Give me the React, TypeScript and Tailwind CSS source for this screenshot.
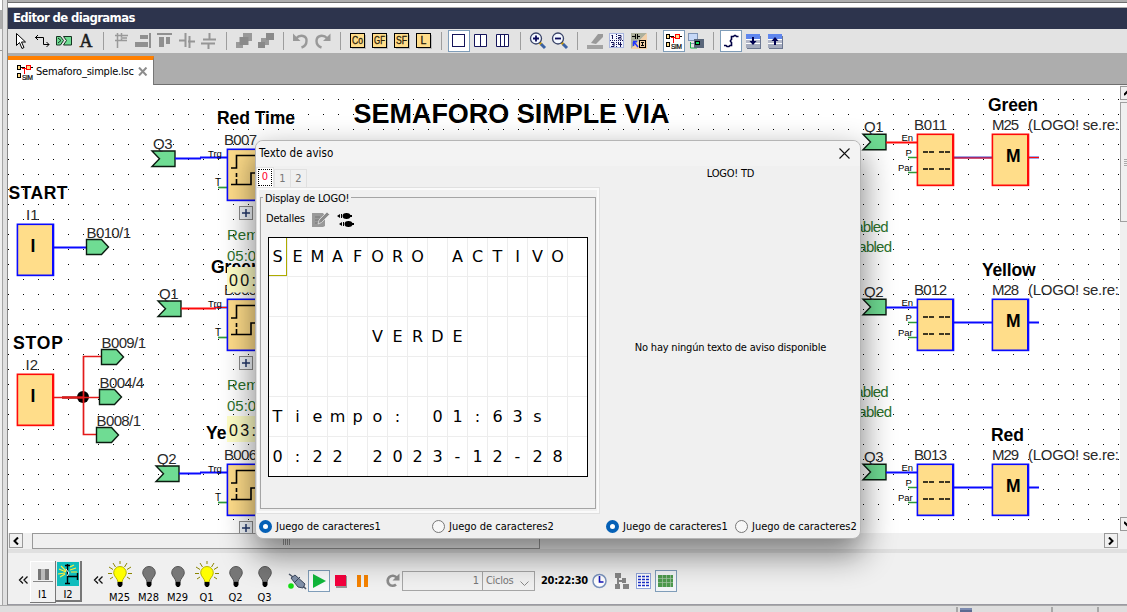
import React from "react";

const UI = "font-['DejaVu_Sans_Condensed','DejaVu_Sans',sans-serif] [font-stretch:condensed]";

/* ---------- toolbar ---------- */

function Slot({ children, active = false }: { children?: React.ReactNode; active?: boolean }) {
  return (
    <div className={active ? "h-[22px] w-[22px] bg-white outline -outline-offset-1 outline-[#7f9db9]" : "h-[22px] w-[22px]"}>
      <svg width="22" height="22" viewBox="0 0 22 22" className="block" fill="none">
        {children}
      </svg>
    </div>
  );
}

function Sep() {
  return (
    <div className="flex h-[18px] w-[13px] justify-center">
      <div className="w-px bg-[#9d9d9d]" />
    </div>
  );
}

function Tagged({ label }: { label: string }) {
  return (
    <Slot>
      <rect x="5" y="5" width="14" height="14" fill="#bbb" />
      <rect x="3.5" y="3.5" width="14" height="14" fill="#ffdd8a" stroke="#000" />
      <text x="10.5" y="14.3" fontSize="10.5" fontFamily="Liberation Sans Narrow, Liberation Sans" fill="#2b220a" stroke="#2b220a" strokeWidth=".3"
        textLength={label.length > 1 ? 11 : undefined} lengthAdjust="spacingAndGlyphs" textAnchor="middle">
        {label}
      </text>
    </Slot>
  );
}

function SimGlyph() {
  return (
    <g shapeRendering="crispEdges">
      <path d="M7 6.5h4M15 6.5h4" stroke="#000" />
      <rect x="3.5" y="4.5" width="3" height="4" stroke="#000" fill="#ffdd8a" />
      <rect x="3.5" y="12.5" width="3" height="4" stroke="#000" fill="#ffdd8a" />
      <path d="M8 7.5h5M10.5 7v6" stroke="#f00" />
      <rect x="12.5" y="4.5" width="4" height="4" stroke="#f00" fill="#ffdd8a" />
      <text x="8" y="18.5" fontSize="6.5" textLength="11" fontFamily="Liberation Sans" fill="#000" stroke="#000" strokeWidth=".2">SIM</text>
    </g>
  );
}

function Magnifier({ plus }: { plus: boolean }) {
  return (
    <Slot>
      <path d="M12 12l2.5 2.5" stroke="#d9a400" strokeWidth="2.5" />
      <path d="M14 14l4 4" stroke="#3c62a4" strokeWidth="3" />
      <circle cx="9" cy="8.5" r="5.5" fill="#f4f8ff" stroke="#3a4468" strokeWidth="1.3" />
      <path d={plus ? "M6 8.5h6M9 5.5v6" : "M6 8.5h6"} stroke="#0a0a5c" strokeWidth="1.8" />
    </Slot>
  );
}

function UpDown({ up }: { up: boolean }) {
  return (
    <Slot>
      <g shapeRendering="crispEdges">
        <path d="M5 19h14V6h-1v12H5z" fill="#6b7690" />
        <rect x="4" y="4" width="14" height="5" fill="#5f86ee" />
        <rect x="4" y="9" width="14" height="1" fill="#fff" />
        <rect x="4" y="10" width="14" height="3" fill="#b4b8c8" />
        <rect x="4" y="13" width="14" height="1" fill="#fff" />
        <rect x="4" y="14" width="14" height="4" fill="#a5abbd" />
        <path d={up ? "M10 9h2v6h-2z" : "M10 7h2v6h-2z"} fill="#000050" />
      </g>
      <path d={up ? "M7.5 11L11 7l3.500 4z" : "M7.500 11L11 15l3.500-4z"} fill="#000050" />
    </Slot>
  );
}

function Toolbar() {
  return (
    <div className="flex h-6 shrink-0 items-center bg-[#e3e3e3] pl-px">
      <Slot>
        <path d="M7.5 3.500v12l3-3 2.500 6 2-1-2.500-5.500h4z" fill="#fff" stroke="#000" />
      </Slot>
      <Slot>
        <path d="M4 7.500h8.500v7H18M7 5l-2.500 2.500L7 10M15.500 12l2.500 2.500-2.500 2.500" stroke="#000" />
      </Slot>
      <Slot>
        <path d="M3.500 6.500h4l3 4-3 4.500h-4zM18.500 6.500h-8l3 4-3 4.500h8z" fill="#6fdc93" stroke="#173321" />
        <path d="M5 8l3 2.500L5 13" stroke="#173321" />
      </Slot>
      <Slot>
        <text x="11" y="17" textAnchor="middle" fontSize="18" fontFamily="Liberation Serif" fill="#1c1c1c" stroke="#1c1c1c" strokeWidth=".5">A</text>
      </Slot>
      <Sep />
      <Slot>
        <path d="M5 5.500h13M5 10.500h12M7.500 3v15M11.500 3v8" stroke="#999" strokeWidth="1.500" />
        <path d="M11 7h6v2h-6z" fill="#aaa" />
      </Slot>
      <Slot>
        <path d="M8 5h8v4H8zM3 12h13v5H3z" fill="#909090" />
        <path d="M18 3v15" stroke="#909090" strokeWidth="2" />
      </Slot>
      <Slot>
        <path d="M5 7h5v10H5zM12 7h4v7h-4zM3 3h15v2H3z" fill="#909090" />
      </Slot>
      <Slot>
        <path d="M3 10.500h6M12 11.500h7M9.500 3v14M13.500 6v12" stroke="#969696" strokeWidth="2" />
      </Slot>
      <Slot>
        <path d="M5 9.500h13M3 13.500h14M11.500 3v6M10.500 14v5" stroke="#969696" strokeWidth="2" />
      </Slot>
      <Sep />
      <Slot>
        <path d="M10 3h9v8h-9zM3 12h7v6H3z" fill="#999" />
        <path d="M6.500 7h9v8h-9z" fill="#8a8a8a" />
      </Slot>
      <Slot>
        <path d="M6 8h8v7H6z" fill="#999" />
        <path d="M11 3h8v7h-8zM3 12h7v6H3z" fill="#8a8a8a" />
      </Slot>
      <Sep />
      <Slot>
        <path d="M3 3.500v7.500h7.500z" fill="#999" />
        <path d="M6 8.500C10 4 17 5.500 16.500 11c0 3-2 5.500-5 6.500" stroke="#999" strokeWidth="2.400" />
      </Slot>
      <Slot>
        <path d="M18.500 3.500v7.500H11z" fill="#999" />
        <path d="M15.500 8.500C11 4 4.500 5.500 4.500 11c0 3 2 5.500 5 6.500" stroke="#999" strokeWidth="2.400" />
      </Slot>
      <Sep />
      <Tagged label="Co" />
      <Tagged label="GF" />
      <Tagged label="SF" />
      <Tagged label="L" />
      <Sep />
      <Slot active>
        <rect x="4.500" y="4.500" width="12" height="12" stroke="#14145a" fill="#fff" />
      </Slot>
      <Slot>
        <path d="M4.500 4.500h12v12h-12zM10.500 4.500v12" stroke="#14145a" fill="#fff" />
      </Slot>
      <Slot>
        <path d="M4.500 4.500h12v12h-12zM8.500 4.500v12M12.500 4.500v12" stroke="#14145a" fill="#fff" />
      </Slot>
      <Sep />
      <Magnifier plus />
      <Magnifier plus={false} />
      <Sep />
      <Slot>
        <path d="M3 15h16v4H3z" fill="#a3a3a3" />
        <path d="M7 13l7-9h5v3l-7 7z" fill="#999" />
      </Slot>
      <Slot>
        <rect x="3.500" y="3.500" width="14" height="14" fill="#f3f5ff" stroke="#a9b6e0" />
        <path d="M10.500 4v14M4 10.500h14" stroke="#14145a" strokeDasharray="1 1" />
        <path d="M6.500 9V5M5.500 5.500h1M12 5.500h3v2h-2.500v1.500H16M5 12.500h3v4H5M6 14.500h2M12.500 12v2.500H16M14.500 12v5" stroke="#14145a" />
      </Slot>
      <Slot>
        <path d="M3 3h16L3 19z" fill="#adb09c" /><path d="M19 3v16H3z" fill="#f3cfa6" />
        <path d="M4 6.500h3M9 6.500h3M7.500 4v5M9.500 4v5" stroke="#000" />
        <path d="M5 11.500h4M5.500 12v4M6 12l4 5" stroke="#2335ff" strokeWidth="1.500" />
        <rect x="11.500" y="10.500" width="6" height="7" stroke="#000" /><path d="M13 12.500h3M13 15.500h3M14.500 12v4" stroke="#000" />
      </Slot>
      <Sep />
      <Slot active><SimGlyph /></Slot>
      <Slot>
        <rect x="3.500" y="3.500" width="9" height="7" fill="#c6d8f7" stroke="#7d93b5" />
        <path d="M5 13h6v1H5z" fill="#8595ad" /><path d="M5.500 12v6H12" stroke="#18b048" />
        <rect x="9" y="9" width="10" height="9" fill="#59667a" />
        <rect x="10.500" y="11.500" width="4" height="3" fill="#18e060" stroke="#000" />
      </Slot>
      <Sep />
      <Slot active>
        <path d="M4 15.500h2l1 1h2l1-1h1.500v-3l-1-1v-1l1-1v-3h2l1-1h1l1 1h2" stroke="#000044" strokeWidth="1.600" />
      </Slot>
      <UpDown up={false} />
      <UpDown up />
    </div>
  );
}

/* ---------- diagram ---------- */

const SANS = "Liberation Sans, Arial, sans-serif";
const YELLOW = "#ffdd8a";
const GREEN = "#6fdc93";
const BLUE = "#0a0aff";
const RED = "#ff0a0a";

type LabelProps = { x: number; y: number; w?: number; size?: number; bold?: boolean; fill?: string; end?: boolean; children: string };

function Label({ x, y, w, size = 15, bold, fill, end, children }: LabelProps) {
  return (
    <text x={x} y={y} fontFamily={SANS} fontSize={size} fontWeight={bold ? 700 : 400} textLength={w}
      textAnchor={end ? "end" : "start"} fill={fill ?? (bold ? "#000" : "#2a2a2a")}>
      {children}
    </text>
  );
}

function Box({ x, y, color }: { x: number; y: number; color: string }) {
  return (
    <g>
      <rect x={x - 0.4} y={y - 0.5} width="37.700" height="52.700" fill={color} />
      <rect x={x + 1.2} y={y + 1.1} width="33.800" height="49.400" fill={YELLOW} />
    </g>
  );
}

function Source({ x, y, name, w = 23 }: { x: number; y: number; name: string; w?: number }) {
  return (
    <g>
      <path d={`M${x} ${y}h${w}v15.5h-${w}l7.5-7.75z`} fill={GREEN} stroke="#0b1c10" strokeWidth="1.4" />
      <Label x={x + 1} y={y - 2} w={19.5}>{name}</Label>
    </g>
  );
}

function Target({ x, y, name }: { x: number; y: number; name: string }) {
  return (
    <g>
      <path d={`M${x + 0.5} ${y}h15l7 7.5-7 7.5h-15z`} fill={GREEN} stroke="#0b1c10" strokeWidth="1.4" />
      <Label x={x + 0.5} y={y - 2} w={44.5}>{name}</Label>
    </g>
  );
}

function Timer({ y, name, qx, q, on }: { y: number; name: string; qx: number; q: string; on?: boolean }) {
  return (
    <g>
      <Label x={224} y={y - 4} w={33}>{name}</Label>
      <Source x={qx} y={y + 2} name={q} />
      <path d={`M${qx + 23} ${y + 9.5}H${on ? 216 : 201}`} stroke={on ? RED : BLUE} strokeWidth="2" />
      <path d={`M${on ? 214 : 200} ${y + 8.5}H228`} stroke={on ? "#4646c8" : BLUE} strokeWidth="2" />
      {on && <path d={`M214 ${y + 8.5}H228`} stroke={RED} />}
      <path d={`M218 ${y + 38.5}H227`} stroke="#2f9a3b" strokeWidth="1.700" />
      <Label x={208} y={y + 7.5} size={9.5} fill="#000">Trg</Label>
      <Label x={215} y={y + 37} size={10} fill="#000">T</Label>
      <Box x={227} y={y} color={BLUE} />
      <path d={`M231 ${y + 19}h5.5v-12.5H262M231 ${y + 35.5}h20v-11.5h10M236.5 ${y + 24}v4m0 2v5`} stroke="#000" strokeWidth="1.6" />
      <rect x="239.500" y={y + 57.5} width="13" height="13" fill="#f1f5fa" stroke="#8b8b8b" />
      <path d={`M242 ${y + 64}h8M246 ${y + 60}v8`} stroke="#20376b" strokeWidth="1.500" />
    </g>
  );
}

type FlagProps = { y: number; q: string; b: string; m: string; title: string; titleX: number; titleW: number; on?: boolean };

function Flag({ y, q, b, m, title, titleX, titleW, on }: FlagProps) {
  const c = on ? RED : BLUE;
  return (
    <g>
      <Label x={titleX} y={y - 23.5} w={titleW} size={17.5} bold>{title}</Label>
      <Source x={863} y={y + 0.2} name={q} />
      <Label x={914} y={y - 4} w={33}>{b}</Label>
      <Label x={992} y={y - 4} w={27}>{m}</Label>
      <Label x={1028} y={y - 4} w={91}>(LOGO! se.re:</Label>
      <path d={`M886 ${y + 8.5}H918`} stroke={c} strokeWidth="2" />
      <path d={`M954 ${y + 23.5}H993M1029 ${y + 23.5}H1039`} stroke={on ? "#4646c8" : BLUE} strokeWidth="2" />
      {on && <path d={`M954 ${y + 24}H993M1029 ${y + 23.5}H1039`} stroke={RED} />}
      <path d={`M908 ${y + 23.5}H918M908 ${y + 38.5}H918`} stroke="#2f9a3b" strokeWidth="1.700" />
      <Label x={901.5} y={y + 7} size={9.5} fill="#000">En</Label>
      <Label x={905.5} y={y + 22} size={9.5} fill="#000">P</Label>
      <Label x={898} y={y + 37} size={9.5} fill="#000">Par</Label>
      <Box x={917} y={y} color={c} />
      <path d={`M923 ${y + 18}h27M923 ${y + 35}h27`} stroke="#000" strokeWidth="1.500" strokeDasharray="5 1 5 5 5 1 5 5" />
      <Box x={992} y={y} color={c} />
      <Label x={1006} y={y + 28} w={14.5} size={17.5} bold>M</Label>
    </g>
  );
}

function Diagram() {
  return (
    <svg width="1112" height="448" viewBox="8 85 1112 448" fill="none" className="block shrink-0 bg-white">
      <defs>
        <pattern id="dots" x="8" y="84" width="15" height="15" patternUnits="userSpaceOnUse">
          <rect width="1" height="1" fill="#000" />
        </pattern>
      </defs>
      <rect x="8" y="85" width="1112" height="448" fill="url(#dots)" />

      <Label x={353.5} y={122.5} w={316} size={27} bold>SEMAFORO SIMPLE VIA</Label>
      <Label x={217} y={124} w={78} size={17.5} bold>Red Time</Label>
      <Label x={8.5} y={198.5} w={59} size={17.5} bold>START</Label>
      <Label x={13} y={348.5} w={50} size={17.5} bold>STOP</Label>

      <Label x={26} y={219.5}>I1</Label>
      <Box x={17} y={224} color={BLUE} />
      <Label x={30.5} y={252} size={17.5} bold>I</Label>
      <path d="M54 247.500H87" stroke={BLUE} strokeWidth="2" />
      <Target x={86} y={239.5} name="B010/1" />

      <Label x={25.5} y={370}>I2</Label>
      <Box x={17} y={374} color={RED} />
      <Label x={30.5} y={402} size={17.5} bold>I</Label>
      <circle cx="83" cy="397" r="6" fill="#000" />
      <path d="M62 397.500H83" stroke="#b01010" strokeWidth="2.500" />
      <path d="M54 397.500H100M101 356.500H83.500V434.500H97" stroke="#e31a1a" strokeWidth="1.700" />
      <Target x={101} y={349.5} name="B009/1" />
      <Target x={99} y={389.5} name="B004/4" />
      <Target x={96} y={427.5} name="B008/1" />

      <Label x={227} y={240} fill="#2c722c">Rem</Label>
      <Label x={227} y={260.5} fill="#2c722c">05:0</Label>
      <Label x={211} y={273} size={17.5} bold>Green</Label>
      <Timer y={149} name="B007" qx={152} q="Q3" />
      <Timer y={299} name="B005" qx={158} q="Q1" on />
      <rect x="227" y="267" width="40" height="25.500" fill="#ffffc8" />
      <Label x={229} y={286} size={16} w={27} fill="#111">00:</Label>
      <Label x={227} y={390} fill="#2c722c">Rem</Label>
      <Label x={227} y={410.5} fill="#2c722c">05:0</Label>
      <Label x={206} y={439} size={17.5} bold>Ye</Label>
      <Timer y={464} name="B006" qx={156} q="Q2" />
      <rect x="227" y="416" width="40" height="26" fill="#ffffc8" />
      <Label x={229} y={436} size={16} w={27} fill="#111">03:</Label>

      {[0, 165].map((d) => (
        <g key={d}>
          <Label x={888.5} y={231.5 + d} w={50} end fill="#2c722c">Enabled</Label>
          <Label x={892} y={252 + d} w={53} end fill="#2c722c">Disabled</Label>
        </g>
      ))}
      <Flag y={134} q="Q1" b="B011" m="M25" title="Green" titleX={988} titleW={50} on />
      <Flag y={299} q="Q2" b="B012" m="M28" title="Yellow" titleX={982} titleW={53.5} />
      <Flag y={464} q="Q3" b="B013" m="M29" title="Red" titleX={991} titleW={33} />
    </svg>
  );
}

/* ---------- simulation bar ---------- */

function Bulb({ name, on }: { name: string; on?: boolean }) {
  return (
    <div className="flex w-[29px] flex-col items-center">
      <svg width="26" height="28" viewBox="0 0 26 28" className="block shrink-0">
        {on && (
          <path d="M13 0v3M6 2l2.500 4M20 2l-2.500 4M2 6l4 2.500M24 6l-4 2.500M1 12.500h4M21 12.500h4M3 18l3-2M23 18l-3-2" stroke="#8a8500" />
        )}
        <path d="M13 5.500a6.300 6.300 0 0 0-6.300 6.300c0 3.500 3.800 5.500 4.300 9.200h4c.5-3.700 4.300-5.700 4.300-9.200A6.300 6.300 0 0 0 13 5.500z"
          fill={on ? "#ffff00" : "#777"} stroke={on ? "#b9b500" : "#555"} />
        <path d="M10.500 21h5v3l-1.500 2h-2l-1.500-2z" fill="#000" />
      </svg>
      <span className="mt-[2px] text-[11px] leading-[13px]">{name}</span>
    </div>
  );
}

function Chevrons() {
  return (
    <svg width="12" height="10" fill="none" className="mt-[14px] block">
      <path d="M5 1.500L1.500 5 5 8.500M9.500 1.500L6 5l3.500 3.500" stroke="#111" strokeWidth="1.300" />
    </svg>
  );
}

function SimBar() {
  return (
    <div className="flex h-[51px] shrink-0 items-start bg-[#f0f0f0] pl-[10px] pt-2">
      <Chevrons />
      <div className="flex h-[42px] w-[26px] flex-col items-center border-b border-r border-[#777] bg-[#f2f2f2] pt-[8px] shadow-[inset_1px_1px_#fff]">
        <svg width="20" height="13" className="block shrink-0">
          <rect x="5" y="0" width="11" height="11" fill="#777" /><rect x="8" y="0" width="4" height="11" fill="#bbb" />
          <path d="M0 12.500h20" stroke="#888" />
        </svg>
        <span className="mt-[6px] text-[11px] leading-[13px]">I1</span>
      </div>
      <div className="flex h-[41px] w-[26px] flex-col items-center border-b-2 border-r-2 border-[#777] bg-[#ececec] pt-px">
        <svg width="22" height="24" className="block shrink-0" fill="none">
          <rect width="22" height="24" fill="#10bcbc" />
          <path d="M10.500 2v20M10.500 14.500H20M20.500 11v7M8 3.500h5M8 21.500h5" stroke="#000" strokeWidth="1.400" />
          <path d="M2 7l7 3M4 4l5 5M1 12l7-1M3 15l5-3M13 8l6-2M13 5l4-2M14 10h6" stroke="#ffee3a" strokeWidth="1.200" />
          <path d="M9 7l3 4-2 3" stroke="#fff" />
        </svg>
        <span className="mt-[2px] text-[11px] leading-[13px]">I2</span>
      </div>
      <div className="ml-[11px]"><Chevrons /></div>
      <div className="flex">
        <Bulb name="M25" on />
        <Bulb name="M28" />
        <Bulb name="M29" />
        <Bulb name="Q1" on />
        <Bulb name="Q2" />
        <Bulb name="Q3" />
      </div>
      <div className="ml-[7px] mt-[9px] flex h-[22px] items-center">
        <Slot>
          <path d="M3 4l4 3M17 16l3 3" stroke="#4a5568" strokeWidth="1.500" />
          <path d="M5 8l4-3 10 9-2 4-5-1z" fill="#8190a8" stroke="#3b475c" /><path d="M9 12l5-5" stroke="#3b475c" />
          <circle cx="5" cy="16" r="2.800" fill="#13df13" />
        </Slot>
        <Slot>
          <rect x=".5" y=".5" width="21" height="21" fill="#f8f9fb" stroke="#7f9db9" />
          <path d="M5 4l13 7-13 7z" fill="#11b83c" />
        </Slot>
        <Slot><rect x="6" y="6" width="11" height="12" fill="#999" /><rect x="5" y="5" width="11" height="11" fill="#f5003d" /></Slot>
        <Slot><path d="M5 5h4v12H5zM12 5h4v12h-4z" fill="#f58200" /></Slot>
        <div className="ml-[7px]">
          <Slot>
            <path d="M15.500 7.500A5 5 0 1 0 15 14.500" stroke="#8c8c8c" strokeWidth="2.700" /><path d="M18.500 3.500v7h-7z" fill="#8c8c8c" />
          </Slot>
        </div>
        <div className="-ml-px h-5 w-[81px] border border-[#a6a6a6] px-[3px] text-right text-[11px] leading-[18px] text-[#777]">1</div>
        <div className="-ml-px flex h-5 w-[53px] items-center justify-between border border-[#a6a6a6] pl-[3px] pr-[5px] text-[11px] tracking-[-0.3px] text-[#777]">
          Ciclos
          <svg width="9" height="5" fill="none" className="mt-1"><path d="M.5.5l4 4 4-4" stroke="#888" /></svg>
        </div>
        <span className="ml-[6px] w-[48px] whitespace-nowrap text-[11px] font-bold tracking-[-0.3px]">20:22:30</span>
        <Slot>
          <circle cx="10.500" cy="11" r="6.500" fill="#fff" stroke="#7b93bd" strokeWidth="1.500" /><path d="M10.500 6v6h4" stroke="#1515b8" strokeWidth="1.600" />
        </Slot>
        <Slot><path d="M4 3h6v5H4zM6 8h2v10H6zM6 10h6v2H6zM11 8h4v5h-4zM4 14h5v5H4zM12 14h6v5h-6z" fill="#858585" /></Slot>
        <Slot>
          <rect x="3.500" y="3.500" width="14" height="15" fill="#fff" stroke="#91a5d8" />
          <path d="M5 6.500h12M5 9.500h12M5 12.500h12M5 15.500h12" stroke="#1b2fc8" strokeDasharray="3 1" strokeWidth="1.300" />
        </Slot>
        <Slot>
          <rect x=".5" y=".5" width="21" height="21" fill="#f3f5f8" stroke="#7f9db9" />
          <rect x="3" y="5" width="15" height="12" fill="#4d9a4d" />
          <path d="M3 8.500h15M3 12.500h15M7.500 5v12M11.500 5v12M15.500 5v12" stroke="#a9c9a9" strokeWidth=".7" />
        </Slot>
      </div>
    </div>
  );
}

/* ---------- dialog ---------- */

const ROWS = ["SEMAFORO ACTIVO ", "                ", "     VERDE      ", "                ", "Tiempo: 01:63s  ", "0:22 2023-12-28 "];

function Display() {
  return (
    <div className="relative grid h-[240px] w-[320px] grid-cols-16 grid-rows-6 bg-white text-[16px] font-['DejaVu_Sans',sans-serif] [font-stretch:normal]">
      {ROWS.flatMap((row, r) =>
        row.split("").map((c, i) => (
          <div key={`${r}-${i}`} className="flex items-center justify-center border-b border-r border-[#ededed] pt-px leading-none">
            {c}
          </div>
        ))
      )}
      <div className="absolute inset-0 border border-black" />
      <div className="absolute left-px top-px h-[38px] w-[18px] border-b border-r border-[#aeab00]" />
    </div>
  );
}

function Radio({ label, on }: { label: string; on?: boolean }) {
  return (
    <div className="flex items-center">
      <div className={on ? "h-[13px] w-[13px] rounded-full border-4 border-[#0560b6] bg-white" : "h-[13px] w-[13px] rounded-full border border-[#777] bg-[#f7f7f7]"} />
      <span className="ml-1 whitespace-nowrap pt-px text-[11px] tracking-normal">{label}</span>
    </div>
  );
}

function Dialog() {
  return (
    <div className="absolute left-[255px] top-[140px] flex h-[399px] w-[606px] flex-col overflow-hidden rounded-lg border border-[#b5b5b5] bg-[#f0f0f0] shadow-[0_14px_32px_2px_rgba(0,0,0,0.48)]">
      <div className="flex h-[25px] shrink-0 items-center justify-between bg-[#f3f3f3] pl-[3px] pr-[10px]">
        <span className="pt-px text-[11.5px] tracking-[0.05px]">Texto de aviso</span>
        <svg width="11" height="11" fill="none"><path d="M.5.5l10 10M10.500.5l-10 10" stroke="#111" strokeWidth="1.100" /></svg>
      </div>
      <div className="flex">
        <div className="flex w-[345px] flex-col">
          <div className="flex h-[21px] items-end text-[11px]">
            <div className="flex h-[20px] w-[18px] items-center justify-center border border-b-0 border-[#e3e3e3] bg-white">
              <div className="flex h-[17px] w-[14px] items-center justify-center border border-dotted border-black pb-px text-[#ff0030]">0</div>
            </div>
            <div className="flex h-[18px] w-[17px] items-center justify-center border border-b-0 border-[#e0e0e0] pt-px text-[#777]">1</div>
            <div className="flex h-[18px] w-4 items-center justify-center border border-b-0 border-l-0 border-[#e0e0e0] pt-px text-[#777]">2</div>
          </div>
          <div className="flex h-[327px] w-[344px] flex-col border border-[#e0e0e0] px-[3px] pt-[9px] pb-[4px] shadow-[inset_0_0_0_2px_#fafafa]">
            <div className="flex h-[313px] w-[336px] flex-col border border-[#a5a5a5]">
              <div className="-mt-[7px] flex">
                <span className="ml-[2px] bg-[#f0f0f0] px-[2px] pt-px text-[11px] leading-[14px] tracking-[-0.2px]">Display de LOGO!</span>
              </div>
              <div className="flex h-[31px] items-center pb-1 pl-[5px]">
                <span className="w-[45px] text-[11px] tracking-[-0.2px]">Detalles</span>
                <svg width="20" height="17" className="block" fill="none">
                  <path d="M1 2h11l2 3v10l-2 1H1z" fill="#999" /><path d="M4 6h5M4 9h4M4 12h3" stroke="#777" />
                  <path d="M7 13l1-4 8-8 2.500 2.500-8 8z" fill="#8b8b8b" stroke="#ededed" strokeWidth=".7" />
                </svg>
                <svg width="18" height="16" className="ml-[6px] block" fill="#000">
                  <ellipse cx="9.500" cy="4" rx="4" ry="3" /><path d="M0 4l3-2v4zM13 3h2v2h-2z" />
                  <ellipse cx="11.500" cy="12" rx="4" ry="3" /><path d="M2 12l3-2v4zM15 11h2v2h-2z" />
                  <path d="M4 2h1v4H4zM6 10h1v4H6z" />
                </svg>
              </div>
              <div className="ml-[7px]"><Display /></div>
            </div>
          </div>
          <div className="flex h-[25px] items-center pl-[3px]">
            <div className="w-[173px]"><Radio label="Juego de caracteres1" on /></div>
            <Radio label="Juego de caracteres2" />
          </div>
        </div>
        <div className="flex w-[259px] flex-col text-[11px] tracking-[-0.2px]">
          <div className="flex h-[14px] items-center justify-center pt-[2px]">LOGO! TD</div>
          <div className="flex h-[334px] items-center justify-center pt-0.5">No hay ningún texto de aviso disponible</div>
          <div className="flex h-[25px] items-center pl-[5px]">
            <div className="w-[129px]"><Radio label="Juego de caracteres1" on /></div>
            <Radio label="Juego de caracteres2" />
          </div>
        </div>
      </div>
    </div>
  );
}

/* ---------- scroll bars ---------- */

function Arrow({ d, className }: { d: string; className: string }) {
  return (
    <div className={`flex shrink-0 items-center justify-center border border-[#999] bg-[#f0f0f0] ${className}`}>
      <svg width="8" height="8" fill="none" className="shrink-0"><path d={d} stroke="#000" strokeWidth="2" /></svg>
    </div>
  );
}

export default function App() {
  return (
    <div className={`relative flex h-[612px] w-[1127px] flex-col overflow-hidden bg-[#f0f0f0] text-black ${UI}`}>
      <div className="flex h-[605px] shrink-0">
        <div className="flex w-2 shrink-0">
          <div className="flex w-[2px] flex-col bg-[#f0f0f0]">
            <div className="h-[10px] bg-white" />
            <div className="h-[19px] bg-[#adadad]" />
            <div className="h-[22px] border-b border-[#999] bg-[#eee]" />
          </div>
          <div className="w-[5px] border-l border-[#a5a5a5] bg-[#e0e0e0]" />
          <div className="w-px bg-[#8b8b8b]" />
        </div>
        <div className="flex w-[1119px] flex-col">
          <div className="h-[8px] shrink-0 border-b border-[#adadad] bg-white">
            <div className="h-[3px] border-b border-[#6d6d6d] bg-[#adadad]" />
          </div>
          <div className="flex h-[21px] shrink-0 items-center bg-[#2d344d] pb-px pl-[5px] text-[13px] font-bold tracking-[-0.62px] text-white">
            Editor de diagramas
          </div>
          <Toolbar />
          <div className="flex h-8 shrink-0 bg-[#adadad] pt-[3px]">
            <div className="flex h-[29px] w-[146px] shrink-0 items-center border-r border-t-4 border-r-[#777] border-t-[#ff7f00] bg-white pl-[5px]">
              <svg width="22" height="22" viewBox="-1 1 22 22" fill="none" className="block shrink-0"><SimGlyph /></svg>
              <span className="ml-[1px] w-[102px] whitespace-nowrap text-[11px] tracking-[-0.2px]">Semaforo_simple.lsc</span>
              <svg width="10" height="9" fill="none" className="-mt-0.5"><path d="M1 .5l7.500 8M8.500.5L1 8.500" stroke="#8d8d8d" strokeWidth="2" /></svg>
            </div>
            <div className="flex-1 border-b border-[#6f6f6f]" />
          </div>
          <div className="flex h-[448px] shrink-0 overflow-hidden">
            <Diagram />
            <div className="flex w-[7px] flex-col overflow-hidden bg-[#f0f0f0] pt-px">
              <Arrow d="M0 6l4-4 4 4" className="h-[14px] w-[15px]" />
              <div className="mt-[2px] flex h-[120px] w-[15px] shrink-0 flex-col items-center justify-center gap-px border border-[#a0a0a0]">
                <div className="h-px w-2 bg-[#aaa]" /><div className="h-px w-2 bg-[#aaa]" /><div className="h-px w-2 bg-[#aaa]" /><div className="h-px w-2 bg-[#aaa]" />
              </div>
              <div className="flex-1" />
              <Arrow d="M0 2l4 4 4-4" className="mb-[2px] h-[14px] w-[15px]" />
            </div>
          </div>
          <div className="flex h-4 shrink-0 pl-px">
            <Arrow d="M6 0.500L2.500 4L6 7.500" className="h-[15px] w-[14px]" />
            <div className="ml-[9px] flex h-4 w-[508px] items-center justify-center gap-px border border-[#999]">
              <div className="h-2 w-px bg-[#999]" /><div className="h-2 w-px bg-[#999]" /><div className="h-2 w-px bg-[#999]" /><div className="h-2 w-px bg-[#999]" />
            </div>
            <div className="flex-1" />
            <Arrow d="M2 0.500L5.500 4L2 7.500" className="mr-[9px] h-[15px] w-[14px]" />
          </div>
          <div className="h-1 shrink-0 bg-[#e0e0e0]" />
          <SimBar />
          <div className="h-px shrink-0 bg-[#9a9aa2]" />
        </div>
      </div>
      <div className="flex h-[7px] shrink-0 border-t border-[#aaa] bg-[#dedede] pt-px">
        <div className="w-[958px] border-r-2 border-[#a8a8a8]" />
        <div className="w-[95px] overflow-hidden border-r-2 border-[#a8a8a8] pl-0.5 pt-px">
          <div className="h-[5px] w-3 border-t-2 border-[#7d8bb0] bg-[#5d6a92]" />
        </div>
        <div className="w-[46px] border-r-2 border-[#a8a8a8]" />
      </div>
      <Dialog />
    </div>
  );
}
